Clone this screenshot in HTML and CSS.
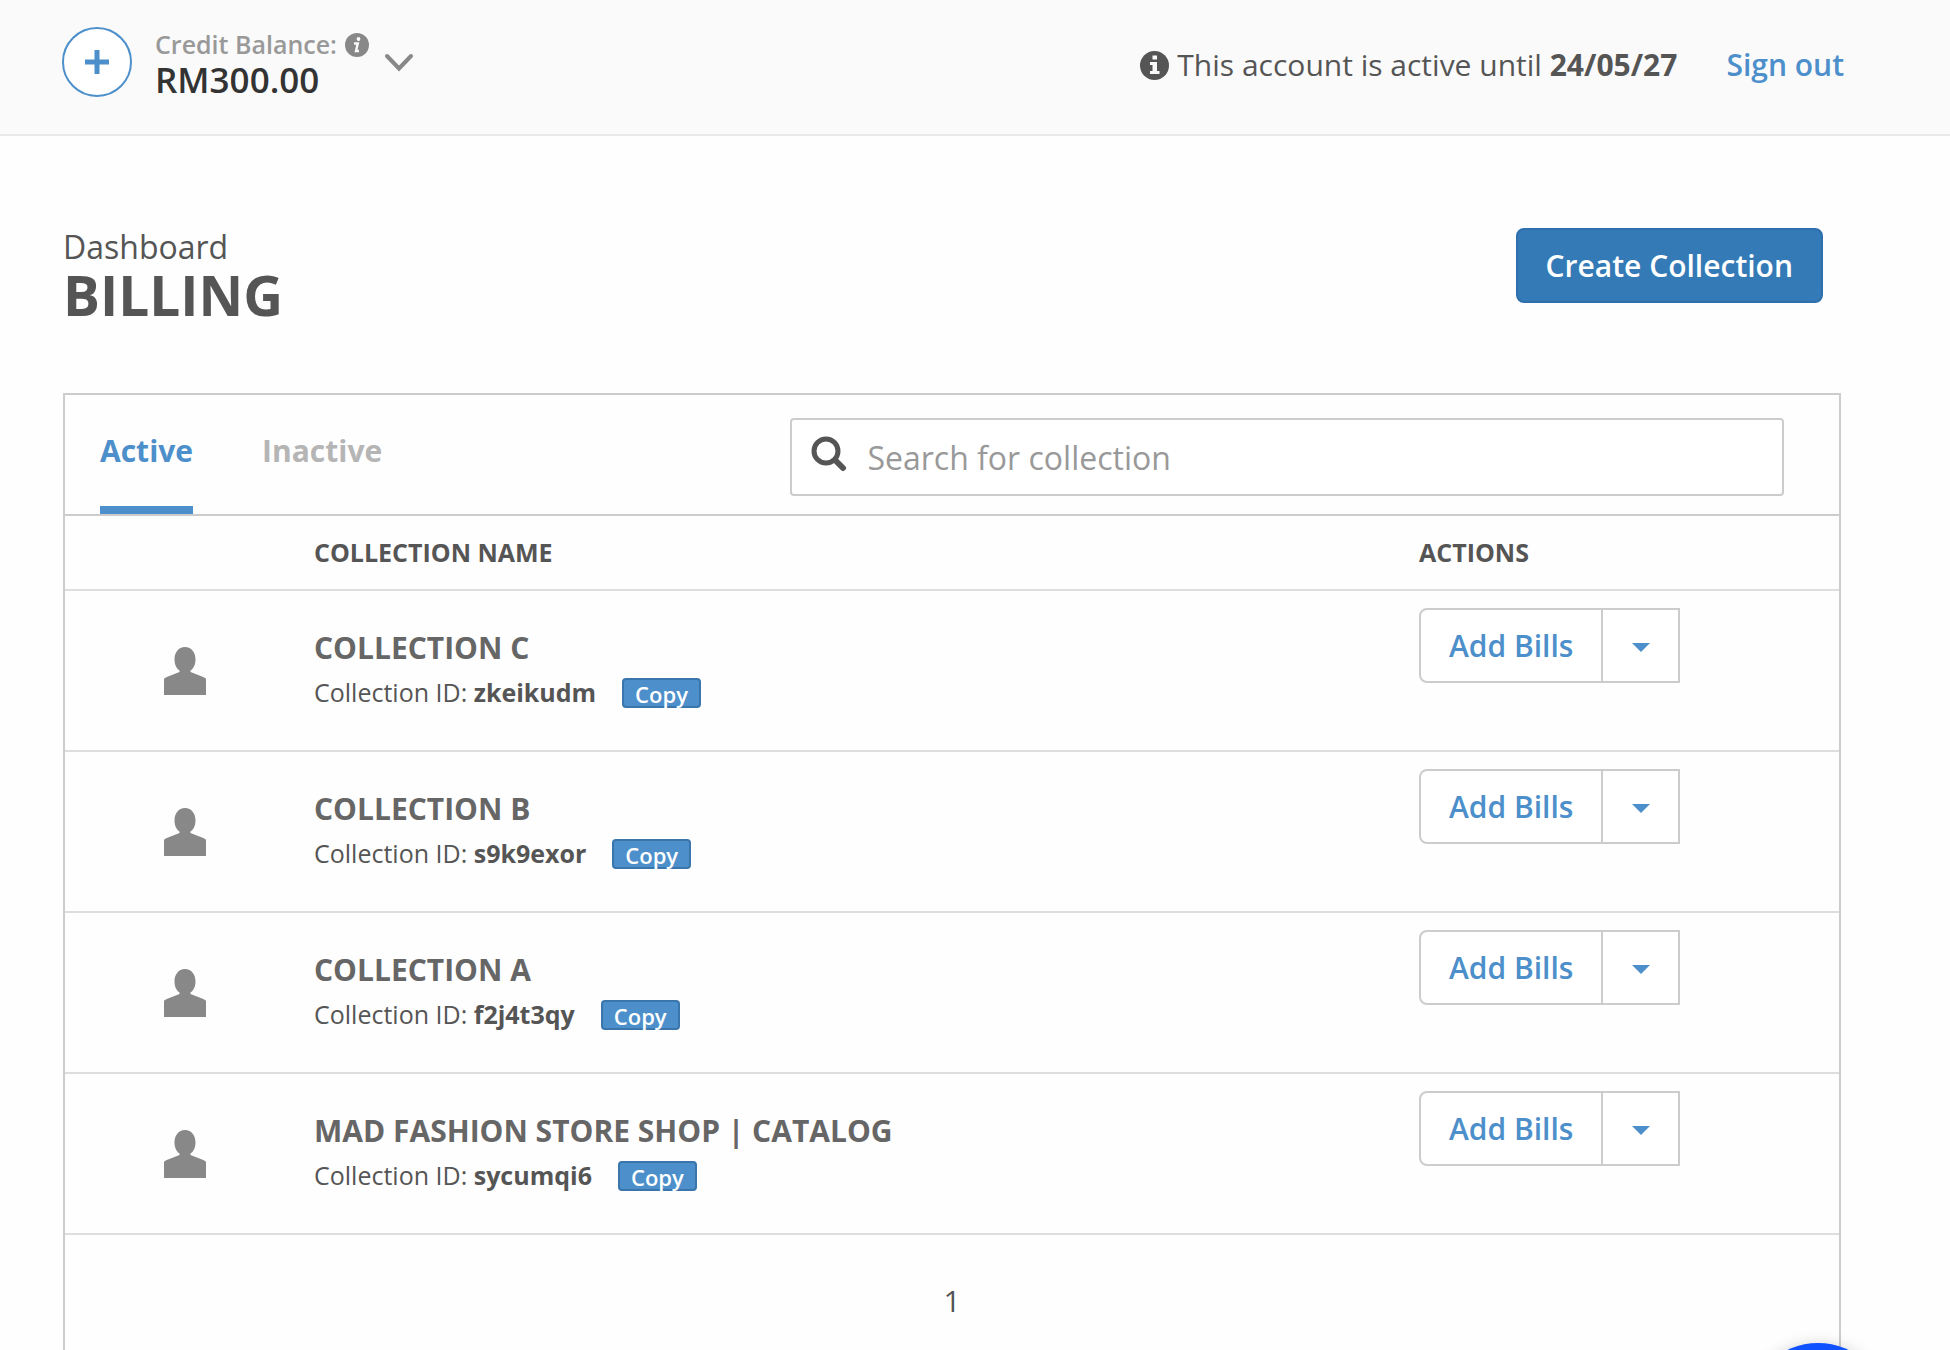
FILE: index.html
```html
<!DOCTYPE html>
<html lang="en">
<head>
    <meta charset="UTF-8">
    <meta name="viewport" content="width=device-width, initial-scale=1">
    <title>Billing</title>
    <link rel="stylesheet" href="styles.css">
</head>
<body>
    <svg class="sprite" aria-hidden="true">
        <symbol id="icon-person" viewBox="0 0 42 48">
            <path d="M21 0C27.500 0 31.500 5.500 31.500 12.500C31.500 17.500 29.500 21.500 26.500 23.500V25L38 29.500Q42 31 42 32V48H0V32Q0 31 4 29.500L15.500 25V23.500C12.500 21.500 10.500 17.500 10.500 12.500C10.500 5.500 14.500 0 21 0Z" fill="currentColor"/>
        </symbol>
    </svg>

    <header class="topbar">
        <div class="credit">
            <button class="add-credit" aria-label="Add credit">
                <svg width="24" height="24" viewBox="0 0 24 24"><path d="M12 0V24M0 12H24" stroke="currentColor" stroke-width="5"/></svg>
            </button>
            <div class="credit-text">
                <div class="credit-label">
                    Credit Balance:
                    <svg width="24" height="24" viewBox="0 0 24 24">
                        <circle cx="12" cy="12" r="12" fill="currentColor"/>
                        <circle cx="13.500" cy="6" r="1.900" fill="#fafafa"/>
                        <path d="M9 10.500H12.800L11 18H14" fill="none" stroke="#fafafa" stroke-width="2.400"/>
                    </svg>
                </div>
                <div class="credit-amount">RM300.00</div>
            </div>
            <button class="credit-toggle" aria-label="Show credit details">
                <svg width="30" height="20" viewBox="0 0 30 20"><path d="M3 3L15 15.500L27 3" fill="none" stroke="currentColor" stroke-width="4" stroke-linecap="round"/></svg>
            </button>
        </div>
        <div class="account">
            <svg width="29" height="29" viewBox="0 0 29 29">
                <circle cx="14.500" cy="14.500" r="14.500" fill="currentColor"/>
                <path d="M12.500 4.500H17V8.500H12.500ZM10 11H17V20H19.500V23H10V20H12.500V14H10Z" fill="#fafafa"/>
            </svg>
            <span>This account is active until <strong>24/05/27</strong></span>
            <a class="sign-out" href="#">Sign out</a>
        </div>
    </header>

    <main class="page">
        <div class="page-head">
            <div>
                <div class="breadcrumb">Dashboard</div>
                <h1>BILLING</h1>
            </div>
            <button class="btn-primary">Create Collection</button>
        </div>

        <section class="panel">
            <div class="panel-bar">
                <nav class="tabs">
                    <a class="tab active" href="#">Active</a>
                    <a class="tab" href="#">Inactive</a>
                </nav>
                <label class="search">
                    <svg width="36" height="36" viewBox="0 0 36 36">
                        <circle cx="15" cy="15" r="12" fill="none" stroke="currentColor" stroke-width="5"/>
                        <path d="M24 24L32 32" stroke="currentColor" stroke-width="6" stroke-linecap="round"/>
                    </svg>
                    <input type="text" placeholder="Search for collection" aria-label="Search for collection">
                </label>
            </div>

            <table class="collections">
                <thead>
                    <tr>
                        <th class="col-icon"></th>
                        <th>COLLECTION NAME</th>
                        <th class="col-actions">ACTIONS</th>
                    </tr>
                </thead>
                <tbody>
                    <tr>
                        <td class="cell-icon"><svg width="42" height="48"><use href="#icon-person"/></svg></td>
                        <td class="cell-name">
                            <div class="name">COLLECTION C</div>
                            <div class="meta"><span>Collection ID: <strong>zkeikudm</strong></span><button class="btn-copy">Copy</button></div>
                        </td>
                        <td class="cell-actions">
                            <div class="btn-group">
                                <button class="btn-bills">Add Bills</button>
                                <button class="btn-caret" aria-label="More actions"><span class="caret"></span></button>
                            </div>
                        </td>
                    </tr>
                    <tr>
                        <td class="cell-icon"><svg width="42" height="48"><use href="#icon-person"/></svg></td>
                        <td class="cell-name">
                            <div class="name">COLLECTION B</div>
                            <div class="meta"><span>Collection ID: <strong>s9k9exor</strong></span><button class="btn-copy">Copy</button></div>
                        </td>
                        <td class="cell-actions">
                            <div class="btn-group">
                                <button class="btn-bills">Add Bills</button>
                                <button class="btn-caret" aria-label="More actions"><span class="caret"></span></button>
                            </div>
                        </td>
                    </tr>
                    <tr>
                        <td class="cell-icon"><svg width="42" height="48"><use href="#icon-person"/></svg></td>
                        <td class="cell-name">
                            <div class="name">COLLECTION A</div>
                            <div class="meta"><span>Collection ID: <strong>f2j4t3qy</strong></span><button class="btn-copy">Copy</button></div>
                        </td>
                        <td class="cell-actions">
                            <div class="btn-group">
                                <button class="btn-bills">Add Bills</button>
                                <button class="btn-caret" aria-label="More actions"><span class="caret"></span></button>
                            </div>
                        </td>
                    </tr>
                    <tr>
                        <td class="cell-icon"><svg width="42" height="48"><use href="#icon-person"/></svg></td>
                        <td class="cell-name">
                            <div class="name">MAD FASHION STORE SHOP | CATALOG</div>
                            <div class="meta"><span>Collection ID: <strong>sycumqi6</strong></span><button class="btn-copy">Copy</button></div>
                        </td>
                        <td class="cell-actions">
                            <div class="btn-group">
                                <button class="btn-bills">Add Bills</button>
                                <button class="btn-caret" aria-label="More actions"><span class="caret"></span></button>
                            </div>
                        </td>
                    </tr>
                </tbody>
            </table>
            <div class="pagination">1</div>
        </section>
    </main>

    <button class="chat-launcher" aria-label="Open chat"></button>
</body>
</html>
```
FILE: styles.css
```css
* {
    box-sizing: border-box;
}
body {
    margin: 0;
    height: 100vh;
    display: flex;
    flex-direction: column;
    overflow: hidden;
    font-family: "Open Sans", sans-serif;
    font-size: 30px;
    color: #555;
    background: #fefefe;
}
button,
input {
    font-family: inherit;
}
button {
    padding: 0;
    border: none;
    background: none;
    cursor: pointer;
}
a {
    color: #4c8fca;
    text-decoration: none;
}
svg {
    display: block;
    flex: none;
}
.sprite {
    position: absolute;
    width: 0;
    height: 0;
}

/* top bar */
.topbar {
    display: flex;
    justify-content: space-between;
    padding: 27px 106px 33px 62px;
    background: #fafafa;
    border-bottom: 2px solid #e9e9e9;
}
.credit {
    display: flex;
}
.add-credit {
    display: flex;
    align-items: center;
    justify-content: center;
    width: 70px;
    height: 70px;
    margin-right: 23px;
    border: 2px solid #4c8fca;
    border-radius: 50%;
    color: #4c8fca;
    background: #fff;
}
.credit-label {
    display: flex;
    gap: 8px;
    font-size: 25px;
    line-height: 34px;
    font-weight: 600;
    color: #999;
}
.credit-label svg {
    margin-top: 6px;
    color: #888;
}
.credit-amount {
    font-size: 35px;
    line-height: 38px;
    font-weight: 600;
    color: #333;
}
.credit-toggle {
    height: 72px;
    margin-left: 15px;
    color: #888;
}
.account {
    display: flex;
    align-items: center;
    line-height: 76px;
}
.topbar .account {
    margin-bottom: -2px;
}
.account svg {
    margin-right: 8px;
}
.sign-out {
    margin-left: 49px;
    font-weight: 600;
}

/* page */
.page {
    flex: 1;
    display: flex;
    flex-direction: column;
    padding: 90px 109px 0 63px;
}
.page-head {
    display: flex;
    align-items: flex-start;
    justify-content: space-between;
    padding-right: 18px;
    margin-bottom: 71px;
}
.breadcrumb {
    font-size: 32px;
    line-height: 42px;
}
h1 {
    margin: 0;
    font-size: 55px;
    line-height: 54px;
    font-weight: 700;
}
.btn-primary {
    height: 75px;
    margin-top: 2px;
    padding: 0 28px;
    border: 2px solid #2f70ac;
    border-radius: 8px;
    background: #337ab7;
    color: #fff;
    font-size: 30px;
    font-weight: 600;
}

/* panel */
.panel {
    flex: 1;
    border: 2px solid #ccc;
    border-bottom: none;
}
.panel-bar {
    display: flex;
    justify-content: space-between;
    padding: 0 55px 0 35px;
    border-bottom: 2px solid #ccc;
}
.tabs {
    display: flex;
    gap: 69px;
}
.tab {
    height: 119px;
    padding-top: 36px;
    line-height: 40px;
    font-weight: 700;
    color: #b5b5b5;
}
.tab.active {
    color: #4c8fca;
    border-bottom: 8px solid #4c8fca;
}
.search {
    display: flex;
    align-items: center;
    gap: 20px;
    width: 59%;
    height: 78px;
    margin-top: 23px;
    padding: 0 19px;
    border: 2px solid #ccc;
    border-radius: 4px;
    background: #fff;
}
.search svg {
    margin-bottom: 7px;
}
.search input {
    flex: 1;
    min-width: 0;
    padding: 0;
    border: none;
    outline: none;
    background: none;
    font-size: 32px;
    color: #555;
}
.search input::placeholder {
    color: #999;
    opacity: 1;
}

/* collections table */
.collections {
    width: 100%;
    table-layout: fixed;
    border-collapse: separate;
    border-spacing: 0;
}
.collections th {
    height: 75px;
    padding: 0 0 2px;
    border-bottom: 2px solid #ddd;
    text-align: left;
    font-size: 25px;
    font-weight: 700;
}
.collections .col-icon {
    width: 249px;
}
.collections .col-actions {
    width: 420px;
}
.collections td {
    height: 161px;
    padding: 0;
    border-bottom: 2px solid #ddd;
    vertical-align: top;
}
.collections .cell-icon {
    padding: 56px 0 0 99px;
    color: #888;
}
.collections .cell-name {
    padding-top: 35px;
}
.collections .cell-actions {
    padding-top: 17px;
}
.name {
    line-height: 44px;
    font-weight: 700;
    color: #666;
}
.meta {
    display: flex;
    align-items: center;
    gap: 26px;
    font-size: 25px;
    line-height: 44px;
}
.btn-copy {
    height: 30px;
    margin-top: 2px;
    padding: 0 11px;
    border: 2px solid #3a76ab;
    border-radius: 4px;
    background: #4c8fca;
    color: #fff;
    font-size: 22px;
    line-height: 28px;
    font-weight: 600;
}
.btn-group {
    display: flex;
}
.btn-bills {
    height: 75px;
    padding: 0 28px;
    border: 2px solid #ccc;
    border-radius: 8px 0 0 8px;
    color: #4c8fca;
    background: #fff;
    font-size: 30px;
    font-weight: 600;
}
.btn-caret {
    display: flex;
    align-items: center;
    justify-content: center;
    width: 77px;
    border: 2px solid #ccc;
    border-left: none;
    background: #fff;
}
.caret {
    margin-top: 4px;
    border: 9px solid transparent;
    border-top-color: #4c8fca;
    border-bottom: none;
}
.pagination {
    padding: 46px 0;
    line-height: 40px;
    text-align: center;
}

.chat-launcher {
    position: fixed;
    right: 62px;
    bottom: -133px;
    width: 140px;
    height: 140px;
    border-radius: 50%;
    background: #0f50ff;
    box-shadow: 0 2px 16px rgba(0, 0, 0, 0.2);
}
```
